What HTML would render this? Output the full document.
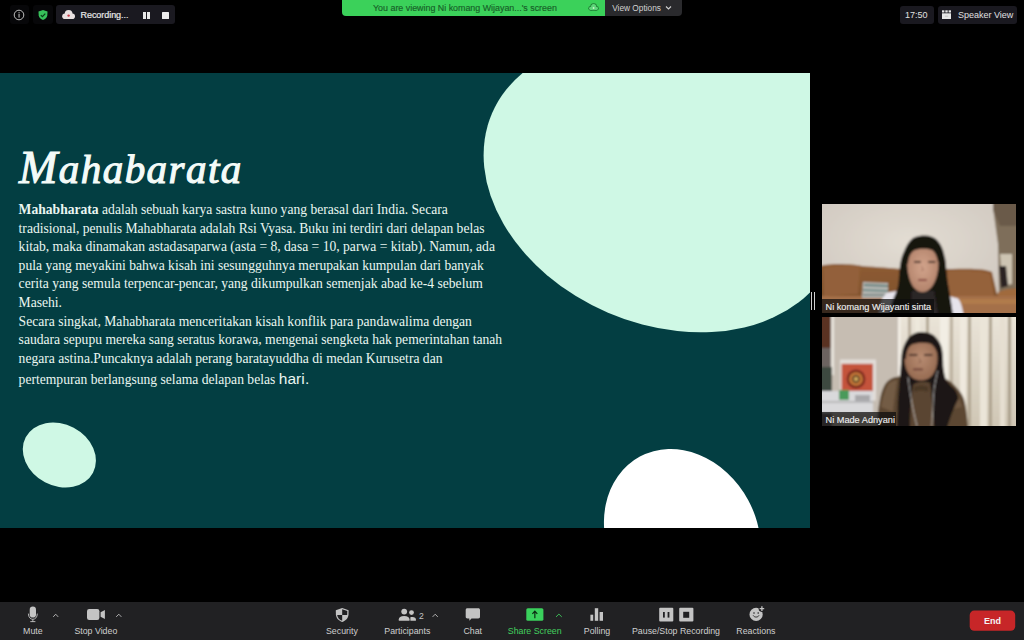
<!DOCTYPE html>
<html><head><meta charset="utf-8">
<style>
html,body{margin:0;padding:0;width:1024px;height:640px;overflow:hidden;background:#000;font-family:"Liberation Sans",sans-serif;}
.a{position:absolute;}
.pill{position:absolute;background:#1a1920;border-radius:3px;}
.tb{color:#c9c9c9;font-size:8.6px;white-space:nowrap;}
.lbl{position:absolute;top:625.75px;width:120px;text-align:center;font-size:8.8px;line-height:10px;color:#cfcfcf;white-space:nowrap;}
.ln{position:absolute;left:18.6px;white-space:nowrap;font-family:"Liberation Serif",serif;font-size:13.6px;line-height:18.63px;color:#eaf6f1;}
</style></head><body>

<!-- top bar -->
<div class="pill" style="left:10px;top:5px;width:19px;height:19px;background:#070709;"></div>
<svg class="a" style="left:13px;top:9px" width="12" height="12" viewBox="0 0 12 12"><circle cx="6" cy="6" r="4.8" fill="none" stroke="#bdbdbd" stroke-width="1"/><rect x="5.5" y="5" width="1.1" height="3.6" fill="#bdbdbd"/><rect x="5.5" y="3.2" width="1.1" height="1.1" fill="#bdbdbd"/></svg>
<div class="pill" style="left:33px;top:5px;width:20px;height:19px;background:#070709;"></div>
<svg class="a" style="left:37px;top:9px" width="12" height="12" viewBox="0 0 12 12"><path d="M6 1 L10.5 2.6 L10.3 6.5 C10 8.7 8.2 10.2 6 11 C3.8 10.2 2 8.7 1.7 6.5 L1.5 2.6 Z" fill="#37c15a"/><path d="M3.8 6.1 L5.4 7.6 L8.3 4.6" fill="none" stroke="#0b3d18" stroke-width="1.2"/></svg>

<div class="pill" style="left:56px;top:5px;width:119px;height:19px;"></div>
<svg class="a" style="left:61px;top:9px" width="15" height="11" viewBox="0 0 15 11"><g fill="#e9e0e0"><circle cx="4" cy="7.2" r="2.8"/><circle cx="7.6" cy="5" r="3.9"/><circle cx="11.2" cy="7.2" r="2.8"/><rect x="4" y="6" width="7.2" height="4"/></g><circle cx="7.6" cy="6.6" r="1.2" fill="#c83a48"/></svg>
<div class="a tb" style="left:80.5px;top:10.3px;font-size:9px;line-height:10px;color:#e8e8e8;-webkit-text-stroke:0.2px #e8e8e8;letter-spacing:-0.05px">Recording...</div>
<div class="a" style="left:143px;top:12px;width:2.5px;height:6.5px;background:#e8e8e8"></div>
<div class="a" style="left:147px;top:12px;width:2.5px;height:6.5px;background:#e8e8e8"></div>
<div class="a" style="left:162.3px;top:12px;width:6.5px;height:6.5px;background:#ececec;border-radius:0.5px"></div>

<!-- green banner -->
<div class="a" style="left:342px;top:0;width:263px;height:15.6px;background:#3bd15a;border-bottom-left-radius:4px;"></div>
<div class="a" style="left:373px;top:3px;font-size:8.9px;color:#176028;white-space:nowrap;letter-spacing:0px;-webkit-text-stroke:0.15px #176028">You are viewing Ni komang Wijayan...'s screen</div>
<svg class="a" style="left:587px;top:2px" width="13" height="10" viewBox="0 0 13 10"><g fill="#1f7a34"><circle cx="3.7" cy="6.3" r="2.4"/><circle cx="6.6" cy="4.6" r="3.3"/><circle cx="9.4" cy="6.3" r="2.4"/><rect x="3.7" y="5" width="5.7" height="3.7"/></g><g fill="#5fd67a"><circle cx="3.7" cy="6.3" r="1.6"/><circle cx="6.6" cy="4.6" r="2.5"/><circle cx="9.4" cy="6.3" r="1.6"/><rect x="3.7" y="5" width="5.7" height="2.9"/></g><circle cx="6.6" cy="6" r="0.9" fill="#c9f5c9"/></svg>
<div class="a" style="left:605px;top:0;width:76.5px;height:15.6px;background:#2a2a2d;border-bottom-right-radius:4px;"></div>
<div class="a" style="left:612.2px;top:3px;font-size:8.3px;line-height:10px;color:#d2d2d2;white-space:nowrap;">View Options</div>
<svg class="a" style="left:665px;top:5px" width="7" height="6" viewBox="0 0 7 6"><path d="M1 1.5 L3.5 4 L6 1.5" fill="none" stroke="#d0d0d0" stroke-width="1.1"/></svg>

<!-- top right -->
<div class="pill" style="left:900px;top:6px;width:34px;height:18px;"></div>
<div class="a tb" style="left:905px;top:10px;font-size:9px;color:#e0e0e0;">17:50</div>
<div class="pill" style="left:938px;top:6px;width:79px;height:18px;"></div>
<svg class="a" style="left:942px;top:10px" width="9" height="9" viewBox="0 0 9 9"><rect x="0" y="0.3" width="2.4" height="2.2" fill="#e6e6e6"/><rect x="3.3" y="0.3" width="2.4" height="2.2" fill="#e6e6e6"/><rect x="6.6" y="0.3" width="2.4" height="2.2" fill="#e6e6e6"/><rect x="0" y="3.3" width="9" height="5.8" fill="#e6e6e6"/><rect x="2.8" y="5.5" width="3.4" height="1.5" fill="#cfcfcf"/></svg>
<div class="a tb" style="left:958px;top:10px;font-size:9px;color:#e0e0e0;">Speaker View</div>

<!-- slide -->
<div class="a" style="left:0;top:73px;width:810px;height:455px;background:#033e42;overflow:hidden;">
<svg class="a" style="left:0;top:0" width="810" height="455" viewBox="0 73 810 455">
 <ellipse cx="662.26" cy="186.40" rx="137.51" ry="185.24" transform="rotate(113.24 662.26 186.40)" fill="#cff8e5"/>
 <rect x="650" y="50" width="180" height="200" fill="#cff8e5"/>
 <ellipse cx="59.35" cy="454.94" rx="30.84" ry="38.02" transform="rotate(117.72 59.35 454.94)" fill="#cff8e5"/>
 <ellipse cx="682.35" cy="535.63" rx="74.84" ry="89.70" transform="rotate(151.75 682.35 535.63)" fill="#ffffff"/>
</svg>
</div>
<div class="a" style="left:19px;top:146px;font-family:'Liberation Serif',serif;font-style:italic;font-size:41px;line-height:44px;color:#f4fbf8;white-space:nowrap;-webkit-text-stroke:1.1px #f4fbf8;letter-spacing:1.45px"><span style="font-size:46px">M</span>ahabarata</div>

<div class="ln" style="top:200.9px"><b>Mahabharata</b> adalah sebuah karya sastra kuno yang berasal dari India. Secara</div>
<div class="ln" style="top:219.5px">tradisional, penulis Mahabharata adalah Rsi Vyasa. Buku ini terdiri dari delapan belas</div>
<div class="ln" style="top:238.2px">kitab, maka dinamakan astadasaparwa (asta = 8, dasa = 10, parwa = kitab). Namun, ada</div>
<div class="ln" style="top:256.8px">pula yang meyakini bahwa kisah ini sesungguhnya merupakan kumpulan dari banyak</div>
<div class="ln" style="top:275.4px">cerita yang semula terpencar-pencar, yang dikumpulkan semenjak abad ke-4 sebelum</div>
<div class="ln" style="top:294.0px">Masehi.</div>
<div class="ln" style="top:312.7px">Secara singkat, Mahabharata menceritakan kisah konflik para pandawalima dengan</div>
<div class="ln" style="top:331.3px">saudara sepupu mereka sang seratus korawa, mengenai sengketa hak pemerintahan tanah</div>
<div class="ln" style="top:349.9px">negara astina.Puncaknya adalah perang baratayuddha di medan Kurusetra dan</div>
<div class="ln" style="top:369.5px">pertempuran berlangsung selama delapan belas <span style="font-family:'Liberation Sans',sans-serif;font-size:15.5px;letter-spacing:0.1px">hari.</span></div>

<!-- resize handle -->
<div class="a" style="left:811px;top:292px;width:1px;height:18px;background:#cfcfcf"></div>
<div class="a" style="left:814px;top:292px;width:1px;height:18px;background:#cfcfcf"></div>

<!-- thumbnails -->
<svg class="a" style="left:822px;top:204px" width="194" height="109" viewBox="0 0 194 109">
 <defs>
  <filter id="bl1" x="-5%" y="-5%" width="110%" height="110%"><feGaussianBlur stdDeviation="0.9"/></filter>
  <radialGradient id="wall1" cx="0.45" cy="0.35" r="0.7"><stop offset="0" stop-color="#e3ddd3"/><stop offset="1" stop-color="#cdc5bd"/></radialGradient>
  <linearGradient id="sofa1" x1="0" y1="0" x2="0" y2="1"><stop offset="0" stop-color="#8e5c33"/><stop offset="0.5" stop-color="#84552e"/><stop offset="1" stop-color="#7a4e2c"/></linearGradient>
  <radialGradient id="face1" cx="0.5" cy="0.45" r="0.6"><stop offset="0" stop-color="#d2a48c"/><stop offset="1" stop-color="#b08068"/></radialGradient>
 </defs>
 <g filter="url(#bl1)">
 <rect x="-2" y="-2" width="198" height="113" fill="url(#wall1)"/>
 <!-- right doorway -->
 <path d="M171 -2 L196 -2 L196 111 L180 111 L177 88 L176 40 L171 4 Z" fill="#7e6e5a"/>
 <path d="M171 -2 L196 -2 L196 22 L178 22 L171 6 Z" fill="#6a5a48"/>
 <path d="M178 50 L190 50 L190 80 L180 82 Z" fill="#cdc4b2"/>
 <path d="M177 62 L184 62 L186 82 L179 84 Z" fill="#2a2320"/>
 <!-- sofa -->
 <path d="M-2 62 C10 59 30 60 40 62 C55 63 70 64 80 65 L130 65 C150 64 165 65 170 68 L175 90 C180 86 190 84 196 85 L196 111 L-2 111 Z" fill="url(#sofa1)"/>
 <path d="M2 64 C15 61 30 61 38 63 L36 90 L2 92 Z" fill="#93603a"/>
 <path d="M126 67 C145 66 160 67 168 70 L172 92 L126 92 Z" fill="#95623b"/>
 <path d="M176 88 C182 85 190 84 196 85 L196 96 L176 96 Z" fill="#a06a3e"/>
 <rect x="-2" y="92" width="198" height="19" fill="#a47048"/>
 <path d="M128 95 L196 95 L196 100 L128 100 Z" fill="#b07c4c"/>
 <!-- books -->
 <path d="M41 78 L66 79 L66 94 L40 94 Z" fill="#b8b8b4"/>
 <path d="M42 80 L66 81 L66 83 L42 82 Z" fill="#5d7c78"/>
 <path d="M41 85 L66 86 L66 88 L41 87 Z" fill="#6a8a86"/>
 <path d="M41 90 L66 90 L66 92 L41 92 Z" fill="#7a8a88"/>
 <!-- shirt -->
 <path d="M56.8 111 L57.5 104 C59 96 62 90 66 88.5 L80 86 L84 111 Z" fill="#e6e4ec"/>
 <path d="M122 111 L123 91 L136 94.5 C139 98 140.5 104 141.5 111 Z" fill="#e6e4ec"/>
 <!-- hair back -->
 <path d="M67 111 C68 104 70 97 73 91 C75 86 76.5 82 76.7 76 C77.5 66 78 56 81.4 49 C84 42 87 37 91 34 C95 32 99 31.5 103 31.5 C108 31.5 112 33 115 36 C119 40 121 45 122 50 C124 56 124 62 124.5 68 C125 74 126 80 127 85 C128 92 129.5 100 131 111 Z" fill="#171311"/>
 <!-- neck/dark shirt -->
 <path d="M88 111 L90 87 L112 87 L116 111 Z" fill="#2c2628"/>
 <!-- face -->
 <path d="M85.2 58 C85.2 49 90 43.5 100.6 43.5 C111 43.5 116.5 49 116.5 58 C116.5 68 114 77 110 82.5 C107 86.5 104 88 100.5 88 C97 88 94 86.5 91 82.5 C87.5 77 85.2 68 85.2 58 Z" fill="url(#face1)"/>
 <!-- fringe -->
 <path d="M83 60 C83 48 87 40 94 36 C99 33.5 106 33.5 111 36 C116 39 119 46 118.5 58 L116 58 C115 52 113 48 110 46 C104 44 96 44.5 92 46.5 C88 49 86.5 54 86 60 Z" fill="#171311"/>
 <path d="M90 46 C96 43 106 42.5 113 46 L111 44 C104 41 96 41.5 90 45 Z" fill="#171311"/>
 <rect x="92" y="57" width="7" height="1.8" rx="0.9" fill="#3a2620"/>
 <rect x="106" y="57" width="7.5" height="1.8" rx="0.9" fill="#3a2620"/>
 <path d="M99.5 62 L101.5 66 L99 66.5" fill="none" stroke="#9a6a58" stroke-width="0.8"/>
 <rect x="96" y="75" width="9" height="2" rx="1" fill="#8a4a44"/>
 </g>
</svg>
<div class="a" style="left:822px;top:299px;width:112px;height:14px;background:rgba(12,12,12,0.72)"></div>
<div class="a" style="left:825.5px;top:301.6px;font-size:9.2px;color:#ececec;white-space:nowrap;-webkit-text-stroke:0.15px #ececec">Ni komang Wijayanti sinta</div>

<svg class="a" style="left:822px;top:317px" width="194" height="109" viewBox="0 0 194 109">
 <defs>
  <filter id="bl2" x="-5%" y="-5%" width="110%" height="110%"><feGaussianBlur stdDeviation="0.9"/></filter>
  <linearGradient id="cur2" x1="0" y1="0" x2="0" y2="1"><stop offset="0" stop-color="#eae4d8"/><stop offset="1" stop-color="#cfc6b4"/></linearGradient>
  <radialGradient id="face2" cx="0.5" cy="0.45" r="0.6"><stop offset="0" stop-color="#b88c72"/><stop offset="1" stop-color="#93684f"/></radialGradient>
 </defs>
 <g filter="url(#bl2)">
 <rect x="-2" y="-2" width="198" height="113" fill="#c6bdb2"/>
 <rect x="-2" y="-2" width="12" height="113" fill="#6c6460"/>
 <rect x="-2" y="-2" width="11" height="33" fill="#5a3224"/>
 <rect x="9" y="-2" width="3" height="60" fill="#e8e4dc"/>
 <rect x="-2" y="50" width="12" height="25" fill="#3c4a40"/>
 <!-- curtain -->
 <rect x="77" y="-2" width="119" height="113" fill="url(#cur2)"/>
 <rect x="76" y="-2" width="2.5" height="60" fill="#f4f0e8"/>
 <rect x="86" y="-2" width="3" height="113" fill="#b9ae9c"/>
 <rect x="93" y="-2" width="5" height="113" fill="#ede8dc"/>
 <rect x="104" y="-2" width="3" height="113" fill="#b3a894"/>
 <rect x="118" y="-2" width="8" height="113" fill="#f2eee4"/>
 <rect x="128" y="-2" width="3" height="113" fill="#bcb19f"/>
 <rect x="138" y="-2" width="6" height="113" fill="#efe9de"/>
 <rect x="146" y="-2" width="3" height="113" fill="#b1a692"/>
 <rect x="158" y="-2" width="7" height="113" fill="#ebe5d8"/>
 <rect x="167" y="-2" width="3" height="113" fill="#aea38f"/>
 <rect x="178" y="-2" width="5" height="113" fill="#e6dfd1"/>
 <rect x="186" y="-2" width="3" height="113" fill="#a99e8a"/>
 <!-- painting -->
 <rect x="18" y="42.5" width="36" height="41" fill="#e2ddd8"/>
 <rect x="19.6" y="46.8" width="31.4" height="29.8" fill="#c4523a"/>
 <circle cx="34" cy="62" r="9.4" fill="#7a2a20"/>
 <circle cx="34" cy="62" r="6.8" fill="#c87a38"/>
 <circle cx="34" cy="62" r="4.2" fill="#6a4a2a"/>
 <circle cx="34" cy="62" r="2" fill="#d8b060"/>
 <!-- table -->
 <path d="M-2 74 L51 74 L51 96 L-2 96 Z" fill="#d9d9db"/>
 <rect x="-2" y="84" width="53" height="2" fill="#b8b8ba"/>
 <rect x="17" y="73" width="10" height="10" fill="#4a9a5a"/>
 <rect x="33" y="78" width="15" height="6" fill="#a8a8aa"/>
 <!-- body -->
 <path d="M55 111 C55.5 100 56 92 57.5 85 C59 76 61 70 64 66 C68 61 73 59.7 78 59.5 L118 60 C126 62 131 66 134 70 C139 75 142 80 143 86 C144.5 94 145.5 102 146 111 Z" fill="#5b4631"/>
 <path d="M59 90 C61 80 63 72 67 66 C70 64 73 63 75 63 C74 72 72 85 71 95 Z" fill="#735c44"/>
 <path d="M128 72 C134 76 138 82 140 90 L132 92 Z" fill="#6e573f"/>
 <!-- hair -->
 <path d="M74.8 111 C75.5 100 75.8 92 75.8 85 C76.5 76 77 68 77.6 62.5 C78.5 54 79 47 79.5 40 C80 33 82 27 87 20 C91 16.5 95 15 98.5 15 C104 15 109 16 112 18.5 C116 22 119 27 120 32 C121 38 121.2 44 121.2 49 C122 56 123 60 124 63 C127 67 130 70 133 72.5 C135 76 136 79 136.4 81.4 C132 90 128 100 125 111 Z" fill="#1b1512"/>
 <!-- chest -->
 <path d="M88 111 C88 95 89 80 91 68 C95 64 103 64 108 66 C110 78 111 95 112 111 Z" fill="#5a4430"/>
 <path d="M92 70 C96 68 102 68 106 70 L106 75 C102 73 96 73 92 75 Z" fill="#4a3828"/>
 <!-- face -->
 <path d="M82.4 40 C82.4 29 88 22.7 99 22.7 C110 22.7 115.5 29 115.5 40 C115.5 50 112.5 57 108 60.5 C105 62.8 102 63.4 99 63.4 C96 63.4 93 62.8 90 60.5 C85.5 57 82.4 50 82.4 40 Z" fill="url(#face2)"/>
 <path d="M81 42 C80.5 30 85 21 93 18 C100 16 108 17 113 21 C117 25 118.5 31 118 40 L116 40 C115 33 112 28.5 108 26.5 C102 25 95 25.5 90 27.5 C86 30 84 35 84 42 Z" fill="#1b1512"/>
 <rect x="87" y="37" width="8.5" height="1.8" rx="0.9" fill="#3a2620"/>
 <rect x="102" y="37" width="8.5" height="1.8" rx="0.9" fill="#3a2620"/>
 <path d="M97 41 L99 45 L96.5 45.5" fill="none" stroke="#7e5542" stroke-width="0.8"/>
 <rect x="91" y="51.5" width="10" height="1.8" rx="0.9" fill="#6a3e36"/>
 <!-- earphone wire -->
 <path d="M86 60 C88 75 90 90 95 109 M115.5 54 C114 62 112 70 111.7 76 C111 88 110.5 100 109.8 109" fill="none" stroke="#dcdcdc" stroke-width="0.7"/>
 </g>
</svg>
<div class="a" style="left:822px;top:412px;width:74px;height:14px;background:rgba(12,12,12,0.72)"></div>
<div class="a" style="left:825.5px;top:414.6px;font-size:9.2px;color:#ececec;white-space:nowrap;-webkit-text-stroke:0.15px #ececec">Ni Made Adnyani</div>

<!-- bottom toolbar -->
<div class="a" style="left:0;top:602px;width:1024px;height:38px;background:#212123;"></div>
<svg class="a" style="left:0;top:602px" width="1024" height="38" viewBox="0 602 1024 38">
 <!-- mic -->
 <rect x="29.7" y="606.6" width="6.3" height="11" rx="3.15" fill="#c4c4c4"/>
 <path d="M28.4 613.6 C28.4 617.4 30.6 619.3 32.85 619.3 C35.1 619.3 37.3 617.4 37.3 613.6" fill="none" stroke="#c4c4c4" stroke-width="0.9"/>
 <rect x="32.4" y="619.2" width="0.9" height="2.6" fill="#c4c4c4"/>
 <rect x="30.3" y="621.2" width="5.1" height="0.9" fill="#c4c4c4"/>
 <path d="M53.2 616.9 L55.7 614.2 L58.2 616.9" fill="none" stroke="#bdbdbd" stroke-width="0.9"/>
 <!-- video -->
 <rect x="87" y="609" width="12.4" height="11" rx="2.2" fill="#c4c4c4"/>
 <path d="M100.6 612.3 L104.9 609.9 L104.9 619.1 L100.6 616.8 Z" fill="#c4c4c4"/>
 <path d="M116.2 616.9 L118.8 614.2 L121.4 616.9" fill="none" stroke="#bdbdbd" stroke-width="0.9"/>
 <!-- security -->
 <path d="M342.2 608 L348.6 610.3 L348.5 614.5 C348.3 618.2 345.6 620.8 342.2 622 C338.8 620.8 336.1 618.2 335.9 614.5 L335.8 610.3 Z" fill="#c4c4c4"/>
 <path d="M342.2 609.3 L347.3 611.1 L347.2 614.9 L342.2 614.9 Z" fill="#212123"/>
 <path d="M342.2 614.9 L337.2 614.9 C337.5 617.9 339.6 619.8 342.2 620.7 Z" fill="#212123"/>
 <!-- participants -->
 <circle cx="404.2" cy="611.6" r="2.9" fill="#c4c4c4"/>
 <path d="M398.8 620.8 L398.8 619.3 C398.8 617.3 400.6 616 404.1 616 C407.6 616 409.5 617.3 409.5 619.3 L409.5 620.8 Z" fill="#c4c4c4"/>
 <circle cx="411.5" cy="612.6" r="2.4" fill="#c4c4c4"/>
 <path d="M410.4 620.8 L410.4 617.3 C411 617 411.7 616.9 412.4 616.9 C414.8 616.9 415.9 618 415.9 619.5 L415.9 620.8 Z" fill="#c4c4c4"/>
 <path d="M432.6 616.9 L435.2 614.2 L437.8 616.9" fill="none" stroke="#bdbdbd" stroke-width="0.9"/>
 <!-- chat -->
 <path d="M467.4 608.2 L478.3 608.2 C479.3 608.2 480 608.9 480 609.9 L480 616.8 C480 617.8 479.3 618.5 478.3 618.5 L471.5 618.5 L469.4 620.7 L469.3 618.5 L467.4 618.5 C466.4 618.5 465.7 617.8 465.7 616.8 L465.7 609.9 C465.7 608.9 466.4 608.2 467.4 608.2 Z" fill="#c4c4c4"/>
 <!-- share -->
 <rect x="526.3" y="608.2" width="17.1" height="12.6" rx="1.6" fill="#3ad15c"/>
 <path d="M534.85 618.2 L534.85 611.6 M532.4 613.8 L534.85 611.2 L537.3 613.8" fill="none" stroke="#0c2a12" stroke-width="1.2"/>
 <path d="M556 616.9 L558.9 614.1 L561.8 616.9" fill="none" stroke="#3fcc5c" stroke-width="0.9"/>
 <!-- polling -->
 <rect x="590.4" y="614.7" width="2.8" height="6.1" fill="#c4c4c4"/>
 <rect x="594.8" y="608.2" width="3.4" height="12.6" fill="#c4c4c4"/>
 <rect x="599.6" y="612" width="3.4" height="8.8" fill="#c4c4c4"/>
 <!-- pause/stop -->
 <rect x="659.2" y="607.8" width="14.1" height="13.7" rx="1" fill="#c4c4c4"/>
 <rect x="663" y="612" width="1.8" height="5.6" fill="#212123"/>
 <rect x="667.6" y="612" width="1.8" height="5.6" fill="#212123"/>
 <rect x="679.2" y="607.8" width="14.2" height="13.7" rx="1" fill="#c4c4c4"/>
 <rect x="683.2" y="611.8" width="6" height="6" fill="#212123"/>
 <!-- reactions -->
 <circle cx="756.1" cy="614.4" r="6.6" fill="#c4c4c4"/>
 <circle cx="761.9" cy="608.6" r="3.3" fill="#212123"/>
 <path d="M761.9 606.3 L761.9 610.9 M759.6 608.6 L764.2 608.6" stroke="#c4c4c4" stroke-width="1.3"/>
 <circle cx="754" cy="613" r="0.8" fill="#212123"/>
 <circle cx="758.2" cy="613" r="0.8" fill="#212123"/>
 <path d="M753.2 615.4 C754.2 617.6 758 617.6 759 615.4" fill="none" stroke="#212123" stroke-width="0.9"/>
 <!-- end -->
 <rect x="969.7" y="610.6" width="45.5" height="20.2" rx="4.5" fill="#c72628"/>
</svg>
<div class="lbl" style="left:-27.15px;">Mute</div>
<div class="lbl" style="left:35.85px;">Stop Video</div>
<div class="lbl" style="left:281.90px;">Security</div>
<div class="lbl" style="left:347.35px;">Participants</div>
<div class="lbl" style="left:412.75px;">Chat</div>
<div class="lbl" style="left:474.70px;color:#43cf5e">Share Screen</div>
<div class="lbl" style="left:537.05px;">Polling</div>
<div class="lbl" style="left:616.00px;">Pause/Stop Recording</div>
<div class="lbl" style="left:695.90px;">Reactions</div>
<div class="a" style="left:419px;top:610.5px;font-size:8.6px;line-height:10px;color:#c4c4c4">2</div>
<div class="a" style="left:969.7px;top:615.5px;width:45.5px;text-align:center;font-size:9px;line-height:10px;font-weight:bold;color:#f4f4f4">End</div>

</body></html>
